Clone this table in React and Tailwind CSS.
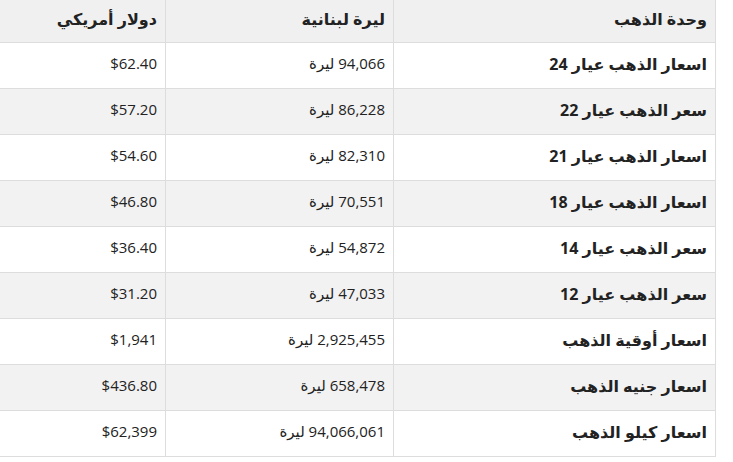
import React from "react";

const rows = [
  ["اسعار الذهب عيار 24", "94,066", "$62.40"],
  ["سعر الذهب عيار 22", "86,228", "$57.20"],
  ["اسعار الذهب عيار 21", "82,310", "$54.60"],
  ["اسعار الذهب عيار 18", "70,551", "$46.80"],
  ["سعر الذهب عيار 14", "54,872", "$36.40"],
  ["سعر الذهب عيار 12", "47,033", "$31.20"],
  ["اسعار أوقية الذهب", "2,925,455", "$1,941"],
  ["اسعار جنيه الذهب", "658,478", "$436.80"],
  ["اسعار كيلو الذهب", "94,066,061", "$62,399"],
];

const App = () => {
  return (
    <div
      className="w-[733px] h-[462px] bg-white text-[#222] overflow-hidden"
      style={{ fontFamily: '"Open Sans", "DejaVu Sans", sans-serif' }}
    >
      <table dir="rtl" className="table-fixed border-separate border-spacing-0 w-[716px] text-[15px]">
        <colgroup>
          <col className="w-[323px]" />
          <col className="w-[228px]" />
          <col className="w-[165px]" />
        </colgroup>
        <thead>
          <tr className="bg-[#f0f0f0] h-[43px]">
            <th className="text-right font-bold text-[16px] px-2 pb-1 border-b border-l border-r border-[#dddddd]">
              وحدة الذهب
            </th>
            <th className="text-right font-bold text-[16px] px-2 pb-1 border-b border-l border-[#dddddd]">
              ليرة لبنانية
            </th>
            <th className="text-right font-bold text-[16px] px-2 pb-1 border-b border-[#dddddd]">
              دولار أمريكي
            </th>
          </tr>
        </thead>
        <tbody>
          {rows.map((r, i) => (
            <tr key={i} className={i % 2 === 1 ? "bg-[#f2f2f2] h-[46px]" : "bg-white h-[46px]"}>
              <td className="text-right font-bold text-[16px] px-2 pb-1 border-b border-l border-r border-[#dddddd]">
                {r[0]}
              </td>
              <td className="text-right px-2 pb-1 border-b border-l border-[#dddddd]">
                {r[1]} ليرة
              </td>
              <td className="text-right px-2 pb-1 border-b border-[#dddddd]">
                <span dir="ltr">{r[2]}</span>
              </td>
            </tr>
          ))}
        </tbody>
      </table>
    </div>
  );
};

export default App;
